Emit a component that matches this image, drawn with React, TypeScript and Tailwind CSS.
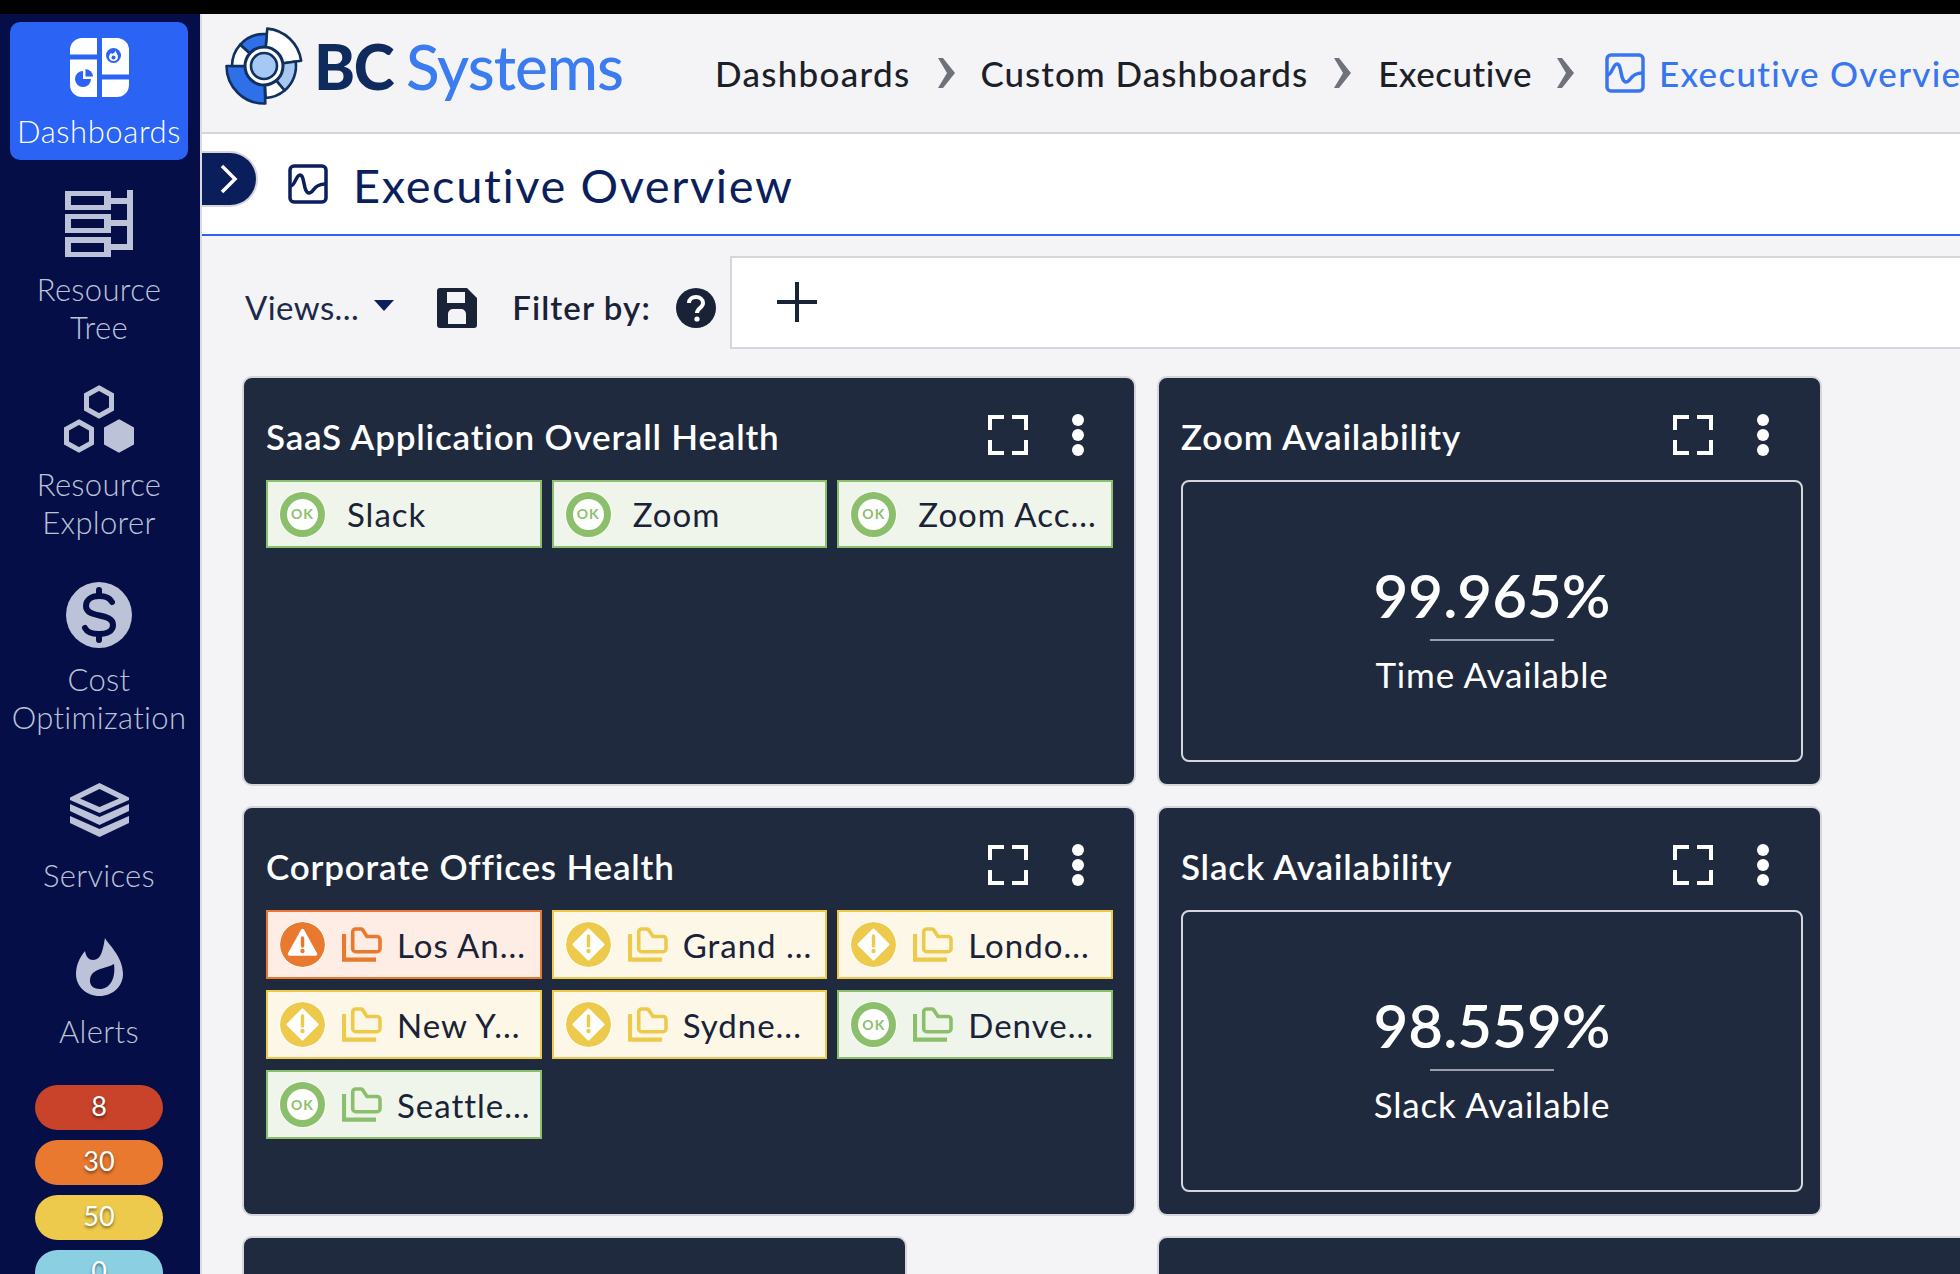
import React from "react";

const Expand = () => (
  <svg width="40" height="40" viewBox="0 0 40 40" fill="none" stroke="#ffffff" strokeWidth="4">
    <path d="M2 15V2h14M24 2h14v13M38 25v13H24M16 38H2V25" />
  </svg>
);

const Dots = () => (
  <div className="flex flex-col gap-[3px] w-[12px]">
    <div className="h-[12px] w-[12px] rounded-full bg-white" />
    <div className="h-[12px] w-[12px] rounded-full bg-white" />
    <div className="h-[12px] w-[12px] rounded-full bg-white" />
  </div>
);

const Folder = ({ color }: { color: string }) => (
  <svg width="40" height="36" viewBox="0 0 40 36" fill="none" stroke={color} strokeWidth="3.600" className="shrink-0">
    <path d="M10.700 5a3 3 0 0 1 3-3H19a2 2 0 0 1 1.500.7L25 9.500H35a3 3 0 0 1 3 3V21.700a3 3 0 0 1-3 3H13.700a3 3 0 0 1-3-3Z" />
    <path d="M2 7V32.700H34" strokeWidth="4.200" />
  </svg>
);

const Status = ({ kind }: { kind: "ok" | "warn" | "err" }) => {
  if (kind === "ok")
    return (
      <div className="w-[45px] h-[45px] rounded-full bg-white border-[7px] border-[#8cbf6c] flex items-center justify-center shrink-0 text-[#8cbf6c] text-[14px] font-bold leading-none shadow-[0_0_0_1px_rgba(255,255,255,0.7)]">
        OK
      </div>
    );
  if (kind === "warn")
    return (
      <svg width="45" height="45" viewBox="0 0 45 45" className="shrink-0 rounded-full shadow-[0_0_0_1px_rgba(255,255,255,0.7)]">
        <circle cx="22.500" cy="22.500" r="22.500" fill="#eeca4c" />
        <path d="M22.500 8L37 22.500L22.500 37L8 22.500Z" fill="#ffffff" stroke="#ffffff" strokeWidth="3" strokeLinejoin="round" />
        <path d="M22.500 14v10" stroke="#eeca4c" strokeWidth="3.400" strokeLinecap="round" />
        <circle cx="22.500" cy="29" r="2.200" fill="#eeca4c" />
      </svg>
    );
  return (
    <svg width="45" height="45" viewBox="0 0 45 45" className="shrink-0 rounded-full shadow-[0_0_0_1px_rgba(255,255,255,0.7)]">
      <circle cx="22.500" cy="22.500" r="22.500" fill="#e8792f" />
      <path d="M22.500 8.500L35.500 32H9.500Z" fill="#ffffff" stroke="#ffffff" strokeWidth="3.500" strokeLinejoin="round" />
      <path d="M22.500 16v8" stroke="#e8792f" strokeWidth="3.400" strokeLinecap="round" />
      <circle cx="22.500" cy="29" r="2.200" fill="#e8792f" />
    </svg>
  );
};

const tileStyles = {
  ok: { box: "bg-[#eff5ea] border-[#8cbf6c]", folder: "#8cbf6c" },
  warn: { box: "bg-[#fcf7e7] border-[#eeca4c]", folder: "#eeca4c" },
  err: { box: "bg-[#fdede5] border-[#e8792f]", folder: "#e8792f" },
};

const Tile = ({ kind, label, folder }: { kind: "ok" | "warn" | "err"; label: string; folder?: boolean }) => (
  <div className={`flex items-center border-2 pl-[12px] text-[#1a2238] text-[33px] tracking-[1px] whitespace-nowrap overflow-hidden ${folder ? "h-[69px]" : "h-[68px]"} ${tileStyles[kind].box}`}>
    <Status kind={kind} />
    {folder ? (
      <div className="ml-[17px] mr-[15px]">
        <Folder color={tileStyles[kind].folder} />
      </div>
    ) : (
      <div className="w-[22px] shrink-0" />
    )}
    <span className="pt-[2px]">{label}</span>
  </div>
);

const Card = ({ title, wide, children }: { title: string; wide?: boolean; children: React.ReactNode }) => (
  <div className={`h-[410px] rounded-[10px] border-2 border-[#d5d6dc] bg-[#1f2a3f] flex flex-col pl-[22px] ${wide ? "pr-[21px]" : "pr-[17px]"}`}>
    <div className={`h-[102px] pt-[12px] flex items-center shrink-0 ${wide ? "pr-[29px]" : "pr-[34px]"}`}>
      <div className="flex-1 mt-[2px] text-white text-[35px] tracking-[0.8px] font-semibold leading-none whitespace-nowrap">{title}</div>
      <Expand />
      <div className="w-[44px]" />
      <Dots />
    </div>
    {children}
  </div>
);

const Metric = ({ value, label }: { value: string; label: string }) => (
  <div className="h-[282px] rounded-[8px] border-2 border-[#d5d6dc] flex flex-col items-center text-white">
    <div className="mt-[78px] text-[60px] font-semibold leading-[70px]">{value}</div>
    <div className="mt-[9px] w-[124px] h-[2px] bg-[#9a9fa9]" />
    <div className="mt-[13px] text-[35px] tracking-[0.8px] leading-[40px]">{label}</div>
  </div>
);

const DashIcon = () => (
  <svg width="59" height="59" viewBox="0 0 59 59" className="shrink-0">
    <path d="M12 0H27V16.500H0V12A12 12 0 0 1 12 0Z" fill="#fff" />
    <path d="M0 21.500H27V59H12A12 12 0 0 1 0 47Z" fill="#fff" />
    <path d="M32 0H47A12 12 0 0 1 59 12V36.500H32Z" fill="#fff" />
    <path d="M32 41.500H59V47A12 12 0 0 1 47 59H32Z" fill="#fff" />
    <path d="M13 33V41H21A8 8 0 1 1 13 33Z" fill="#2b63f5" />
    <path d="M15.500 31A8 8 0 0 1 23 38.500H15.500Z" fill="#2b63f5" />
    <circle cx="43.500" cy="17.500" r="7.500" fill="#2b63f5" />
    <path d="M45.500 12.500C46 15 48 16.500 48 19C48 21.500 46 23 43.500 23C41 23 39 21.500 39 19C39 17.500 40 16 41 15C41.500 16.500 44.500 16 45.500 12.500Z" fill="#fff" />
    <circle cx="43.500" cy="19.500" r="2" fill="#2b63f5" />
  </svg>
);

const TreeIcon = () => (
  <svg width="68" height="67" viewBox="0 0 68 67" fill="#bcc3d8" className="shrink-0">
    <path fillRule="evenodd" d="M0 1h46v19H0ZM6 6v9h33V6Z" />
    <path fillRule="evenodd" d="M0 24h46v19H0ZM6 29v9h33V29Z" />
    <path fillRule="evenodd" d="M0 47h46v20H0ZM6 53v9h33V53Z" />
    <path d="M46 8h16V0h6v60h-22v-6h16V36H46v-6h16V14H46Z" />
  </svg>
);

const HexIcon = () => (
  <svg width="70" height="69" viewBox="0 0 70 69" fill="none" stroke="#bcc3d8" strokeWidth="5" className="shrink-0">
    <path d="M35 3l12.500 7v14L35 31l-12.500-7V10Z" />
    <path d="M15 37l12.500 7v14L15 65l-12.500-7V44Z" />
    <path d="M55 37l12.500 7v14L55 65l-12.500-7V44Z" fill="#bcc3d8" />
  </svg>
);

const CostIcon = () => (
  <svg width="66" height="68" viewBox="0 0 66 68" className="shrink-0">
    <circle cx="33" cy="34" r="33" fill="#bcc3d8" />
    <g fill="none" stroke="#050e47" strokeWidth="6" strokeLinecap="round">
      <path d="M46 21c-2-4-7-6-13-6-8 0-13 4-13 10 0 13 27 6 27 19 0 6-6 9-14 9-7 0-12-2-14-6" />
      <path d="M33 9v6M33 53v6" />
    </g>
  </svg>
);

const LayersIcon = () => (
  <svg width="59" height="54" viewBox="0 0 59 54" fill="#bcc3d8" className="shrink-0">
    <path fillRule="evenodd" d="M29.500 0L59 14.500V17L29.500 30L0 17V14.500ZM29.500 6L10 15.500L29.500 24L49 15.500Z" />
    <path d="M0 21L29.500 34L59 21V28L29.500 42L0 28Z" />
    <path d="M0 33L29.500 46L59 33V40L29.500 54L0 40Z" />
  </svg>
);

const FlameIcon = () => (
  <svg width="47" height="58" viewBox="0 0 47 58" className="shrink-0">
    <path
      fillRule="evenodd"
      fill="#bcc3d8"
      d="M29 0C31 5 47 18 47 36C47 48 37 58 23.500 58C10 58 0 48 0 36C0 28 3 20 9 13C10 19 13 22 17 22C26 22 27 10 29 0ZM38 26C30 31 14 30 14 43C14 48 18 51 24 51C33 51 40 42 38 26Z"
    />
  </svg>
);

const seg = (r: number, a0: number, a1: number, rIn = 18) => {
  const p = (rad: number, a: number) => {
    const t = (a * Math.PI) / 180;
    return `${(40 + rad * Math.cos(t)).toFixed(2)} ${(40 + rad * Math.sin(t)).toFixed(2)}`;
  };
  return `M${p(rIn, a0)}L${p(r, a0)}A${r} ${r} 0 0 1 ${p(r, a1)}L${p(rIn, a1)}A${rIn} ${rIn} 0 0 0 ${p(rIn, a0)}Z`;
};

const Logo = () => (
  <svg width="80" height="80" viewBox="0 0 80 80" className="shrink-0" stroke="#10305f" strokeWidth="2.600" strokeLinejoin="round">
    <path d={seg(37.5, -85, -8)} fill="#ffffff" />
    <path d={seg(32, -8, 50)} fill="#a8c8f2" />
    <path d={seg(32, 50, 87)} fill="#ffffff" />
    <path d={seg(37.5, 88, 180)} fill="#2f6fe8" />
    <path d={seg(32, 180, 222)} fill="#ffffff" />
    <path d={seg(32, 222, 275)} fill="#2f6fe8" />
    <circle cx="40" cy="40" r="19" fill="#ffffff" strokeWidth="3" />
    <circle cx="40" cy="40" r="13" fill="#a5c8f5" strokeWidth="2.600" />
  </svg>
);

const ChartIcon = ({ color, size }: { color: string; size: number }) => (
  <svg width={size} height={size} viewBox="0 0 40 40" fill="none" stroke={color} strokeWidth="3.500" className="shrink-0">
    <rect x="2" y="2" width="36" height="36" rx="4" />
    <path d="M2.500 22C7 22 8 11 12 11C17 11 15 29 21 29C26 29 25 20 37 20" />
  </svg>
);

const Chevron = () => (
  <svg width="18" height="30" viewBox="0 0 18 30" className="shrink-0" fill="#6f727b">
    <path d="M1 0L6 0L18 15L6 30L1 30L10 15Z" />
  </svg>
);

const NavItem = ({ icon, lines, pad }: { icon: React.ReactNode; lines: string[]; pad: string }) => (
  <div className={`flex flex-col items-center shrink-0 text-[#bcc3d8] text-[31px] tracking-[0.3px] leading-[38px] font-light ${pad}`}>
    {icon}
    {lines.map((l) => (
      <div key={l}>{l}</div>
    ))}
  </div>
);

const Pill = ({ value, color }: { value: string; color: string }) => (
  <div className={`w-[128px] h-[45px] rounded-full shrink-0 flex items-center justify-center pb-[4px] text-white text-[27px] leading-none [text-shadow:0_2px_3px_rgba(0,0,0,0.5)] ${color}`}>
    {value}
  </div>
);

export default function App() {
  return (
    <div className="w-[1960px] h-[1274px] overflow-hidden bg-black font-['Lato',sans-serif] flex flex-col">
      <div className="h-[14px] shrink-0 bg-black" />
      <div className="flex-1 flex min-h-0">
        <aside className="w-[202px] shrink-0 bg-[#050e47] border-r-2 border-[#d9dae2] pr-[2px] flex flex-col items-stretch overflow-hidden">
          <div className="mt-[8px] mx-[10px] w-[178px] h-[138px] shrink-0 rounded-[10px] bg-[#2b63f5] flex flex-col items-center pt-[16px] text-white text-[31px] tracking-[0.6px] font-light leading-[38px]">
            <DashIcon />
            <div className="mt-[15px]">Dashboards</div>
          </div>
          <NavItem pad="pt-[30px] [&>svg]:mb-[13px]" icon={<TreeIcon />} lines={["Resource", "Tree"]} />
          <NavItem pad="pt-[39px] [&>svg]:mb-[11px]" icon={<HexIcon />} lines={["Resource", "Explorer"]} />
          <NavItem pad="pt-[40px] [&>svg]:mb-[11px]" icon={<CostIcon />} lines={["Cost", "Optimization"]} />
          <NavItem pad="pt-[47px] [&>svg]:mb-[19px]" icon={<LayersIcon />} lines={["Services"]} />
          <NavItem pad="pt-[44px] [&>svg]:mb-[16px]" icon={<FlameIcon />} lines={["Alerts"]} />
          <div className="mt-[35px] flex flex-col items-center gap-[10px] shrink-0">
            <Pill value="8" color="bg-[#c8432a]" />
            <Pill value="30" color="bg-[#e8792f]" />
            <Pill value="50" color="bg-[#eeca4c]" />
            <Pill value="0" color="bg-[#8bd0e2]" />
          </div>
        </aside>
        <main className="flex-1 min-w-0 bg-[#f4f4f7] flex flex-col overflow-hidden">
          <header className="h-[120px] shrink-0 border-b-2 border-[#d6d6da] flex items-center whitespace-nowrap text-[35px] tracking-[1px] font-medium text-[#1c1f28]">
            <div className="ml-[22px] mb-[14px]"><Logo /></div>
            <div className="mb-[14px] ml-[10px] text-[62px] font-black text-[#0f2a5c] tracking-[-1.500px] leading-none">BC</div>
            <div className="mb-[14px] ml-[13px] text-[62px] text-[#3b7cf0] tracking-[-1px] leading-none">Systems</div>
            <div className="ml-[92px] flex items-center">
              <span className="tracking-[1.300px]">Dashboards</span>
              <div className="ml-[26px] mr-[26px]"><Chevron /></div>
              <span>Custom Dashboards</span>
              <div className="ml-[25px] mr-[27px]"><Chevron /></div>
              <span className="tracking-[0.500px]">Executive</span>
              <div className="ml-[24px] mr-[31px]"><Chevron /></div>
              <ChartIcon color="#3876f0" size={40} />
              <span className="ml-[14px] tracking-[1.300px] text-[#3876f0]">Executive Overview</span>
            </div>
          </header>
          <div className="h-[102px] shrink-0 bg-white border-b-2 border-[#2b63f5] flex items-center">
            <div className="w-[56px] h-[56px] mb-[10px] rounded-r-[28px] bg-[#0a1e5c] border-2 border-l-0 border-[#d5d6dc] flex items-center justify-center shrink-0">
              <svg width="18" height="30" viewBox="0 0 18 30" fill="none" stroke="#fff" strokeWidth="3.500">
                <path d="M2 2L15 15L2 28" />
              </svg>
            </div>
            <div className="ml-[30px]"><ChartIcon color="#0b1f5c" size={40} /></div>
            <div className="ml-[25px] pt-[2px] text-[47px] tracking-[1.600px] text-[#0b1f5c] leading-none whitespace-nowrap">Executive Overview</div>
          </div>
          <div className="flex-1 min-h-0 pl-[40px] pt-[20px]">
            <div className="flex items-stretch whitespace-nowrap h-[95px] w-[1800px]">
              <div className="w-[488px] shrink-0 flex items-center text-[#1c2a4a] text-[33px] tracking-[0.4px] pl-[3px] pt-[8px]">
                <span>Views...</span>
                <svg width="20" height="11" viewBox="0 0 20 11" className="ml-[15px] mb-[4px] shrink-0" fill="#0b1f5c"><path d="M0 0h20L10 11Z" /></svg>
                <svg width="40" height="40" viewBox="0 0 40 40" className="ml-[43px] shrink-0" fill="#1a2238">
                  <path fillRule="evenodd" d="M3 0H30L40 10V37a3 3 0 0 1-3 3H3a3 3 0 0 1-3-3V3A3 3 0 0 1 3 0ZM10 4V15H28V4ZM11 26V36H29V26A5 5 0 0 0 24 21H16A5 5 0 0 0 11 26Z" />
                </svg>
                <span className="ml-[35px] font-semibold text-[#1a2238] tracking-[1.100px]">Filter by:</span>
                <svg width="40" height="40" viewBox="0 0 40 40" className="ml-[25px] shrink-0">
                  <circle cx="20" cy="20" r="20" fill="#1a2238" />
                  <path d="M13 15c0-4 3-6 7-6s7 2.500 7 6c0 5-6 5-6 10" fill="none" stroke="#fff" strokeWidth="4" />
                  <circle cx="21" cy="31" r="2.600" fill="#fff" />
                </svg>
              </div>
              <div className="w-[1300px] shrink-0 h-[93px] bg-white border-2 border-[#d5d6dc] pl-[45px] flex items-center">
                <svg width="40" height="40" viewBox="0 0 40 40" className="mb-[1px]" stroke="#1a2238" strokeWidth="4"><path d="M20 0V40M0 20H40" /></svg>
              </div>
            </div>
            <div className="mt-[25px] grid grid-cols-[894px_665px] gap-x-[21px] gap-y-[20px] w-[1800px]">
              <Card title="SaaS Application Overall Health" wide>
                <div className="grid grid-cols-3 gap-x-[10px]">
                  <Tile kind="ok" label="Slack" />
                  <Tile kind="ok" label="Zoom" />
                  <Tile kind="ok" label="Zoom Acc..." />
                </div>
              </Card>
              <Card title="Zoom Availability">
                <Metric value="99.965%" label="Time Available" />
              </Card>
              <Card title="Corporate Offices Health" wide>
                <div className="grid grid-cols-3 gap-x-[10px] gap-y-[11px]">
                  <Tile folder kind="err" label="Los An..." />
                  <Tile folder kind="warn" label="Grand ..." />
                  <Tile folder kind="warn" label="Londo..." />
                  <Tile folder kind="warn" label="New Y..." />
                  <Tile folder kind="warn" label="Sydne..." />
                  <Tile folder kind="ok" label="Denve..." />
                  <Tile folder kind="ok" label="Seattle..." />
                </div>
              </Card>
              <Card title="Slack Availability">
                <Metric value="98.559%" label="Slack Available" />
              </Card>
              <div className="w-[665px] h-[100px] rounded-t-[10px] border-2 border-[#d5d6dc] bg-[#1f2a3f]" />
              <div className="w-[850px] h-[100px] rounded-t-[10px] border-2 border-[#d5d6dc] bg-[#1f2a3f]" />
            </div>
          </div>
        </main>
      </div>
    </div>
  );
}
